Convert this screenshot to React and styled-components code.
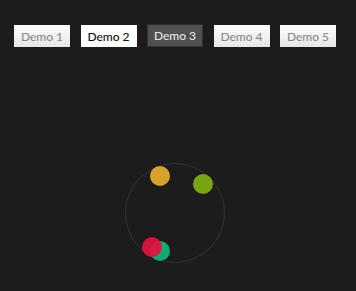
import styled, { createGlobalStyle } from "styled-components";

const GlobalStyle = createGlobalStyle`
  html, body {
    margin: 0;
    padding: 0;
    background: #1c1c1c;
    font-family: Lato, "Open Sans", sans-serif;
  }
`;

const demos = ["Demo 1", "Demo 2", "Demo 3", "Demo 4", "Demo 5"];

// dot positions on the orbit, relative to the ring box
const dots = [
  { color: "#d6a22c", x: 23.5, y: 1.5 },
  { color: "#79a412", x: 66.7, y: 9.5 },
  { color: "#11a974", x: 24, y: 77 },
  { color: "#e3123f", x: 15.7, y: 73, alpha: 0.92 },
];

function App() {
  return (
    <Page>
      <GlobalStyle />
      <Nav>
        {demos.map((d, i) => (
          <DemoButton key={d} variant={i === 1 ? "light" : i === 2 ? "active" : "default"}>
            {d}
          </DemoButton>
        ))}
      </Nav>
      <Stage>
        <Ring>
          {dots.map((d) => (
            <Dot
              key={d.color}
              color={d.color}
              style={{ left: d.x, top: d.y, opacity: d.alpha || 1 }}
            />
          ))}
        </Ring>
      </Stage>
    </Page>
  );
}

const Page = styled.div`
  width: 356px;
  height: 291px;
  overflow: hidden;
  background: #1c1c1c;
`;

const Nav = styled.nav`
  display: flex;
  gap: 10.5px;
  padding: 25px 0 0 14px;
`;

const DemoButton = styled.button`
  box-sizing: border-box;
  width: 56px;
  height: 22px;
  padding: 0;
  font-family: Lato, "Open Sans", sans-serif;
  font-size: 12px;
  font-weight: 500;
  cursor: pointer;
  border: none;

  ${({ variant }) =>
    variant === "light"
      ? `
    background: #fff;
    color: #111;
  `
      : variant === "active"
      ? `
    background: #505050;
    color: #e6e6e6;
    border: 1px solid #333;
    border-top-color: #2a2a2a;
    height: 23px;
    margin-top: -1px;
  `
      : `
    background: linear-gradient(#ffffff, #e6e6e6);
    color: #8a8a8a;
  `}
`;

const Stage = styled.div`
  padding: 116px 0 0 125px;
`;

const Ring = styled.div`
  position: relative;
  width: 100px;
  height: 100px;
  box-sizing: border-box;
  border: 1px solid #343434;
  border-radius: 50%;
`;

const Dot = styled.span`
  position: absolute;
  width: 20px;
  height: 20px;
  border-radius: 50%;
  background: ${({ color }) => color};
`;

export default App;
